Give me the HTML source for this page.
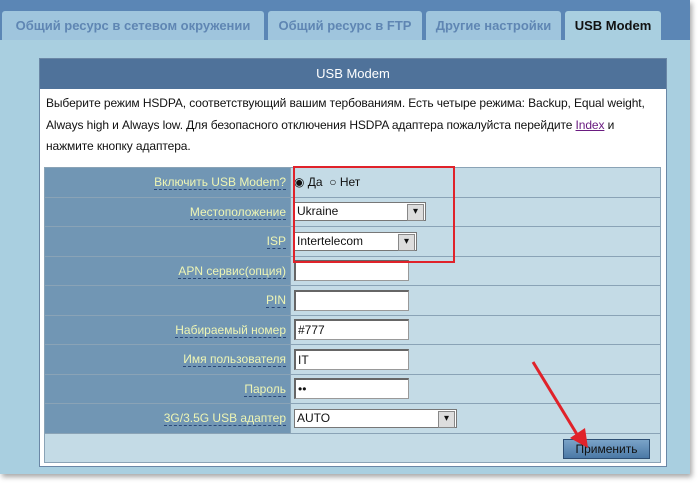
<!DOCTYPE html>
<html><head><meta charset="utf-8"><style>
*{margin:0;padding:0;box-sizing:border-box}
body{width:700px;height:484px;background:#fff;font-family:"Liberation Sans","DejaVu Sans",sans-serif;position:relative;overflow:hidden}
#bg{position:absolute;left:0;top:0;width:690px;height:474px;background:#a9cfe0;box-shadow:2px 3px 5px rgba(0,0,0,.35)}
#top{position:absolute;left:0;top:0;width:690px;height:40px;background:#5b86b5}
.tab{position:absolute;top:11px;height:29px;background:#9fc5dd;color:#5f86b3;font-weight:bold;font-size:13px;line-height:29px;text-align:center;border-radius:3px 3px 0 0;white-space:nowrap;overflow:hidden}
.tab.act{background:#a9cfe0;color:#111}
#panel{position:absolute;left:39px;top:58px;width:628px;height:409px;background:#fff;border:1px solid #6a87a6}
#hdr{height:30px;background:#4f729a;color:#fff;font-size:13px;text-align:center;line-height:30px}
#desc{font-size:12px;line-height:21.5px;padding:4px 6px;color:#111;height:79px;letter-spacing:-0.1px}
#desc a{color:#6a1b80}
table{position:absolute;left:4px;top:108px;width:617px;border-collapse:collapse}
td{height:29.5px;border:1px solid #8aa3b6;font-size:12px}
td.l{width:246px;background:#7196b4;text-align:right;padding-right:4px;color:#eef5b5}
td.l span{border-bottom:1px dashed #2b4a78}
td.v{background:#c4dbe6;padding-left:3px;color:#111}
.in{display:inline-block;width:115px;height:21px;background:#fff;border:1px solid #999;border-top:2px solid #666;border-left:2px solid #666;vertical-align:middle;font-size:12px;line-height:18px;padding-left:2px}
.sel{display:inline-block;height:19px;background:#fff;border:1px solid #777;vertical-align:middle;font-size:12px;line-height:17px;padding-left:2px;position:relative}
.sel:after{content:"▾";position:absolute;right:1px;top:1px;width:15px;height:15px;background:#ddd;border:1px solid #888;font-size:10px;line-height:14px;text-align:center}
#btnrow{position:absolute;left:4px;top:375px;width:617px;height:29px;background:#c4dbe6;border:1px solid #8aa3b6;border-top:none}
#btn{position:absolute;right:10px;top:5px;width:87px;height:20px;background:linear-gradient(#7aa3c8,#4b79a6);border:1px solid #2d4e73;font-size:12px;text-align:center;line-height:18px;color:#111}
#redbox{position:absolute;left:293px;top:166px;width:162px;height:97px;border:2px solid #e0222a}
</style></head><body>
<div id="bg"></div>
<div id="top"></div>
<div class="tab" style="left:2px;width:262px">Общий ресурс в сетевом окружении</div>
<div class="tab" style="left:268px;width:154px">Общий ресурс в FTP</div>
<div class="tab" style="left:426px;width:135px">Другие настройки</div>
<div class="tab act" style="left:565px;width:96px">USB Modem</div>
<div id="panel">
<div id="hdr">USB Modem</div>
<div id="desc">Выберите режим HSDPA, соответствующий вашим тербованиям. Есть четыре режима: Backup, Equal weight, Always high и Always low. Для безопасного отключения HSDPA адаптера пожалуйста перейдите <a href="#">Index</a> и<br>нажмите кнопку адаптера.</div>
<table>
<tr><td class="l"><span>Включить USB Modem?</span></td><td class="v">◉ Да &nbsp;○ Нет</td></tr>
<tr><td class="l"><span>Местоположение</span></td><td class="v"><span class="sel" style="width:132px">Ukraine</span></td></tr>
<tr><td class="l"><span>ISP</span></td><td class="v"><span class="sel" style="width:123px">Intertelecom</span></td></tr>
<tr><td class="l"><span>APN сервис(опция)</span></td><td class="v"><span class="in"></span></td></tr>
<tr><td class="l"><span>PIN</span></td><td class="v"><span class="in"></span></td></tr>
<tr><td class="l"><span>Набираемый номер</span></td><td class="v"><span class="in">#777</span></td></tr>
<tr><td class="l"><span>Имя пользователя</span></td><td class="v"><span class="in">IT</span></td></tr>
<tr><td class="l"><span>Пароль</span></td><td class="v"><span class="in">••</span></td></tr>
<tr><td class="l"><span>3G/3.5G USB адаптер</span></td><td class="v"><span class="sel" style="width:163px">AUTO</span></td></tr>
</table>
<div id="btnrow"><div id="btn">Применить</div></div>
</div>
<div id="redbox"></div>
<svg style="position:absolute;left:0;top:0" width="700" height="484">
<line x1="533" y1="362" x2="578" y2="436" stroke="#e0222a" stroke-width="3"/>
<polygon points="570,438 588,448 585,428" fill="#e0222a"/>
</svg>
</body></html>
